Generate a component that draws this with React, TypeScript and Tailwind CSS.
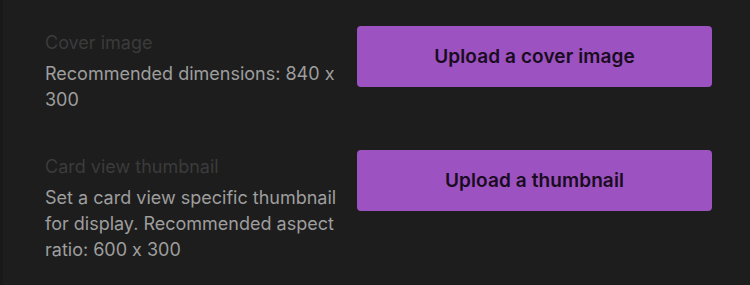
export default function App() {
  const rows = [
    {
      title: "Cover image",
      text: "Recommended dimensions: 840 x 300",
      button: "Upload a cover image",
    },
    {
      title: "Card view thumbnail",
      text: "Set a card view specific thumbnail for display. Recommended aspect ratio: 600 x 300",
      button: "Upload a thumbnail",
    },
  ];

  return (
    <div className="flex h-[285px] w-[750px] bg-[#1d1d1d] font-['Inter',sans-serif] [font-feature-settings:'calt'_0]">
      <div className="w-[3px] bg-[#191919]" />
      <div className="flex flex-1 flex-col gap-[37px] pl-[42px] pr-[38px] pt-[26px]">
        {rows.map((row) => (
          <div key={row.title} className="flex items-start justify-between">
            <div className="w-[300px] pt-[4px] text-[18px] leading-[26px]">
              <div className="text-[#3b3b3b]">{row.title}</div>
              <p className="mt-[5px] text-[#9e9e9e]">{row.text}</p>
            </div>
            <button className="flex h-[61px] w-[355px] items-center justify-center rounded-[4px] bg-[#9c52c0] pt-[2px] text-[19px] font-semibold tracking-[0.1px] text-[#190b20]">
              {row.button}
            </button>
          </div>
        ))}
      </div>
    </div>
  );
}
